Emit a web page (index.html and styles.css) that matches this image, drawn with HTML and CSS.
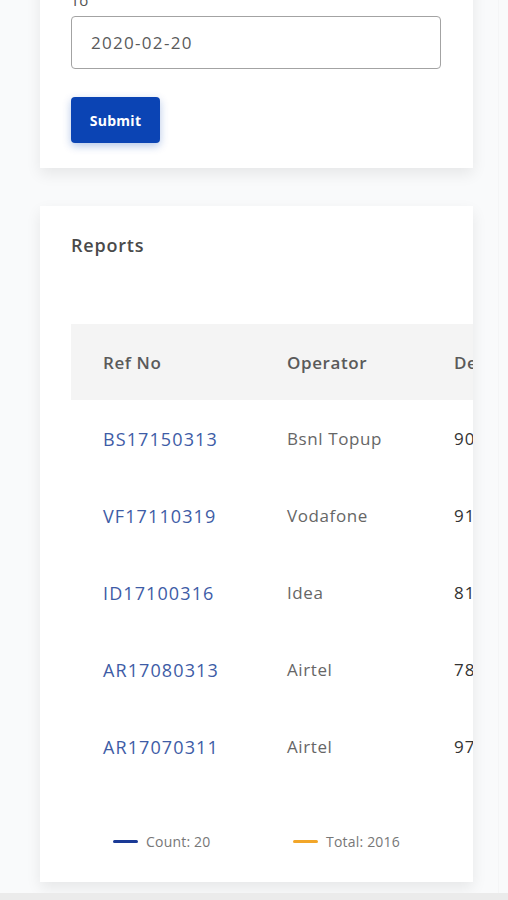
FILE: index.html
```html
<!DOCTYPE html>
<html>
<head>
<meta charset="utf-8">
<link rel="stylesheet" href="styles.css">
</head>
<body>
<main class="page">
  <section class="card card-form">
    <label class="field-label" for="to">To</label>
    <div class="input" id="to">2020-02-20</div>
    <button class="btn-submit" type="button">Submit</button>
  </section>

  <section class="card card-report">
    <h2 class="title">Reports</h2>
    <div class="table">
      <div class="row head">
        <div class="cell">Ref No</div>
        <div class="cell">Operator</div>
        <div class="cell">Denomination</div>
      </div>
      <div class="row">
        <div class="cell ref">BS17150313</div>
        <div class="cell op">Bsnl Topup</div>
        <div class="cell num">90</div>
      </div>
      <div class="row">
        <div class="cell ref">VF17110319</div>
        <div class="cell op">Vodafone</div>
        <div class="cell num">91</div>
      </div>
      <div class="row">
        <div class="cell ref">ID17100316</div>
        <div class="cell op">Idea</div>
        <div class="cell num">81</div>
      </div>
      <div class="row">
        <div class="cell ref">AR17080313</div>
        <div class="cell op">Airtel</div>
        <div class="cell num">78</div>
      </div>
      <div class="row">
        <div class="cell ref">AR17070311</div>
        <div class="cell op">Airtel</div>
        <div class="cell num">97</div>
      </div>
    </div>
    <div class="legend">
      <div class="legend-item"><span class="swatch blue"></span>Count: 20</div>
      <div class="legend-item"><span class="swatch orange"></span>Total: 2016</div>
    </div>
  </section>
</main>
<div class="bottom-bar"></div>
</body>
</html>
```
FILE: styles.css
```css
html, body {
  margin: 0;
  padding: 0;
}
body {
  background: #f9fafb;
  font-family: "Open Sans", "Noto Sans", sans-serif;
  color: #444;
  height: 900px;
  overflow: hidden;
  display: flex;
  flex-direction: column;
}
.page {
  flex: 1;
  padding-left: 40px;
  width: 433px;
  border-right: 1px solid #f4f5f6;
  padding-right: 25px;
}
.card {
  background: #fff;
  box-shadow: 0 6px 14px rgba(0, 0, 0, 0.08);
}
.card-form {
  margin-top: -30px;
  padding: 20px 32px 25px 31px;
  display: flex;
  flex-direction: column;
  align-items: flex-start;
}
.field-label {
  font-size: 15px;
  line-height: 20px;
  color: #555;
}
.input {
  margin-top: 6px;
  box-sizing: border-box;
  width: 370px;
  height: 53px;
  border: 1px solid #a3a3a3;
  border-radius: 4px;
  padding: 0 19px;
  display: flex;
  align-items: center;
  font-size: 17px;
  letter-spacing: 1.3px;
  color: #5a5a5a;
}
.btn-submit {
  margin-top: 28px;
  width: 89px;
  height: 46px;
  border: none;
  border-radius: 4px;
  background: #0b44b4;
  color: #fff;
  font-family: "Open Sans", sans-serif;
  font-weight: 700;
  font-size: 14px;
  letter-spacing: 0.3px;
  box-shadow: 0 3px 8px rgba(11, 68, 180, 0.3);
}
.card-report {
  margin-top: 38px;
  padding: 28px 0 30px 31px;
  overflow: hidden;
}
.title {
  margin: 0;
  font-size: 18px;
  line-height: 22px;
  font-weight: 600;
  letter-spacing: 0.8px;
  color: #4a4a4a;
}
.table {
  margin-top: 68px;
}
.row {
  display: grid;
  grid-template-columns: 184px 167px 160px;
  height: 77px;
  align-items: center;
}
.row.head {
  background: #f4f4f4;
  height: 76px;
  font-weight: 600;
  color: #5a5a5a;
  letter-spacing: 0.6px;
}
.cell {
  padding-left: 32px;
  font-size: 17px;
  white-space: nowrap;
}
.ref {
  color: #3e5ca6;
  font-size: 18px;
  letter-spacing: 1.1px;
}
.op {
  color: #666;
  letter-spacing: 0.6px;
}
.num {
  color: #333;
  letter-spacing: 1px;
}
.legend {
  margin-top: 45px;
  padding-left: 42px;
  display: flex;
  height: 22px;
  align-items: center;
}
.legend-item {
  width: 180px;
  display: flex;
  align-items: center;
  gap: 8px;
  font-size: 14px;
  letter-spacing: 0.2px;
  color: #777;
}
.swatch {
  width: 25px;
  height: 3px;
  border-radius: 2px;
}
.swatch.blue { background: #1a3a96; }
.swatch.orange { background: #f2a629; }
.bottom-bar {
  height: 7px;
  background: #ebebeb;
}
```
